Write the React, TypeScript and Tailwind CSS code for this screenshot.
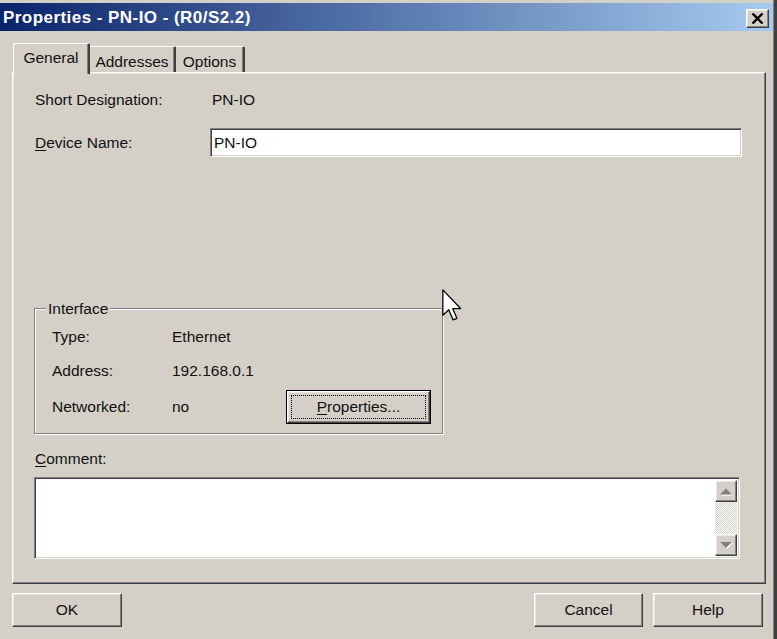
import React from "react";

const raised =
  "border border-t-white border-l-white border-r-[#404040] border-b-[#404040] shadow-[inset_-1px_-1px_0_#808080,inset_1px_1px_0_#e8e6e1]";
const sunken =
  "border border-t-[#808080] border-l-[#808080] border-r-white border-b-white shadow-[inset_1px_1px_0_#404040,inset_-1px_-1px_0_#d4d0c8]";

function Btn({ children, className = "" }: { children: React.ReactNode; className?: string }) {
  return (
    <div className={`${raised} bg-[#d4d0c8] flex items-center justify-center h-[34px] ${className}`}>
      {children}
    </div>
  );
}

function ScrollBtn({ up }: { up?: boolean }) {
  return (
    <div className={`${raised} bg-[#d4d0c8] w-[22px] h-[22px] flex items-center justify-center`}>
      <svg width="14" height="9" viewBox="0 0 14 9">
        {up ? (
          <>
            <polygon points="1,7.5 13,7.5 7,1.5" fill="#ffffff" transform="translate(1,1)" />
            <polygon points="1,7.5 13,7.5 7,1.5" fill="#808080" />
          </>
        ) : (
          <>
            <polygon points="1,1 13,1 7,7" fill="#ffffff" transform="translate(1,1)" />
            <polygon points="1,1 13,1 7,7" fill="#808080" />
          </>
        )}
      </svg>
    </div>
  );
}

export default function App() {
  return (
    <div className="w-[777px] h-[639px] bg-[#d4d0c8] flex relative overflow-hidden font-['Liberation_Sans',Arial,sans-serif] text-[15.5px] text-[#111] leading-none">
      <div className="w-[773px] flex flex-col">
        <div className="h-[3px]" />
        {/* Title bar */}
        <div className="h-[28px] bg-[linear-gradient(to_right,#0a246a,#a6caf0)] flex items-start">
          <div className="pl-[3px] pt-[6px] text-white font-bold text-[17px] tracking-[0.45px] flex-1">
            Properties - PN-IO - (R0/S2.2)
          </div>
          <div className={`${raised} bg-[#d4d0c8] w-[23px] h-[19px] mt-[6px] mr-[4px] flex items-center justify-center`}>
            <svg width="13" height="11" viewBox="0 0 13 11">
              <path d="M1.5 0.5 L11.5 10.5 M11.5 0.5 L1.5 10.5" stroke="#000" strokeWidth="2.4" />
            </svg>
          </div>
        </div>

        {/* Tabs */}
        <div className="h-[29px] mt-[12px] ml-[13px] flex items-start relative z-10">
          <div className="w-[77px] h-[31px] bg-[#d4d0c8] border-l border-t border-white border-r-2 border-r-[#404040] shadow-[inset_-1px_0_0_#808080] rounded-tl-[2px] rounded-tr-[2px] flex items-start justify-center pt-[6px]">
            General
          </div>
          <div className="w-[86px] h-[26px] mt-[3px] bg-[#d4d0c8] border-t border-white border-r-2 border-r-[#404040] shadow-[inset_-1px_0_0_#808080] rounded-tr-[2px] flex items-start justify-center pt-[7px]">
            Addresses
          </div>
          <div className="w-[69px] h-[26px] mt-[3px] bg-[#d4d0c8] border-t border-white border-r-2 border-r-[#404040] shadow-[inset_-1px_0_0_#808080] rounded-tr-[2px] flex items-start justify-center pt-[7px]">
            Options
          </div>
        </div>

        {/* Panel */}
        <div className={`ml-[12px] w-[754px] h-[512px] ${raised} flex flex-col pl-[21px]`}>
          <div className="mt-[17px] h-[20px] flex items-center">
            <div className="w-[176px] pl-[1px]">Short Designation:</div>
            <div className="pl-[2px]">PN-IO</div>
          </div>
          <div className="mt-[18px] h-[29px] flex items-center">
            <div className="w-[176px] pl-[1px]">
              <span className="underline underline-offset-2">D</span>evice Name:
            </div>
            <div className={`${sunken} bg-white w-[532px] h-[29px] flex items-center pl-[3px]`}>PN-IO</div>
          </div>

          {/* Interface group */}
          <div className="mt-[151px] w-[409px] h-[126px] relative border border-[#808080] shadow-[inset_1px_1px_0_#fff,1px_1px_0_#fff] flex flex-col pl-[17px]">
            <div className="absolute -top-[9px] left-[11px] px-[2px] bg-[#d4d0c8] h-[18px] flex items-center">
              Interface
            </div>
            <div className="mt-[18px] h-[20px] flex items-center">
              <div className="w-[120px]">Type:</div>
              <div>Ethernet</div>
            </div>
            <div className="mt-[14px] h-[20px] flex items-center">
              <div className="w-[120px]">Address:</div>
              <div>192.168.0.1</div>
            </div>
            <div className="mt-[9px] h-[34px] flex items-center">
              <div className="w-[120px]">Networked:</div>
              <div className="w-[114px]">no</div>
              <div className="w-[145px] h-[34px] border border-black">
                <div className={`${raised} bg-[#d4d0c8] w-full h-full p-[3px]`}>
                  <div className="w-full h-full border border-dotted border-black flex items-center justify-center">
                    <span>
                      <span className="underline underline-offset-2">P</span>roperties...
                    </span>
                  </div>
                </div>
              </div>
            </div>
          </div>

          <div className="mt-[15px] h-[20px] flex items-center pl-[1px]">
            <span className="underline underline-offset-2">C</span>omment:
          </div>
          <div className={`mt-[8px] w-[706px] h-[82px] ${sunken} bg-white flex justify-end p-[2px]`}>
            <div className="w-[22px] h-full flex flex-col">
              <ScrollBtn up />
              <div className="flex-1 bg-[repeating-conic-gradient(#d4d0c8_0_25%,#ffffff_0_50%)] bg-size-[2px_2px]" />
              <ScrollBtn />
            </div>
          </div>
        </div>

        {/* Bottom buttons */}
        <div className="mt-[9px] flex pl-[12px] pr-[10px] gap-[10px]">
          <Btn className="w-[110px]">OK</Btn>
          <div className="flex-1" />
          <Btn className="w-[109px]">Cancel</Btn>
          <Btn className="w-[110px]">Help</Btn>
        </div>
      </div>
      <div className="w-[4px] bg-[#404040] border-l border-[#808080]" />

      {/* Mouse cursor */}
      <svg className="absolute left-[442px] top-[289px]" width="22" height="34" viewBox="0 0 13 20">
        <path
          d="M0.5 0.5 L0.5 15.5 L4 12.2 L6.6 18.2 L8.8 17.3 L6.3 11.5 L11 11.5 Z"
          fill="#ffffff"
          stroke="#000000"
          strokeWidth="0.75"
          strokeLinejoin="round"
        />
      </svg>
    </div>
  );
}
